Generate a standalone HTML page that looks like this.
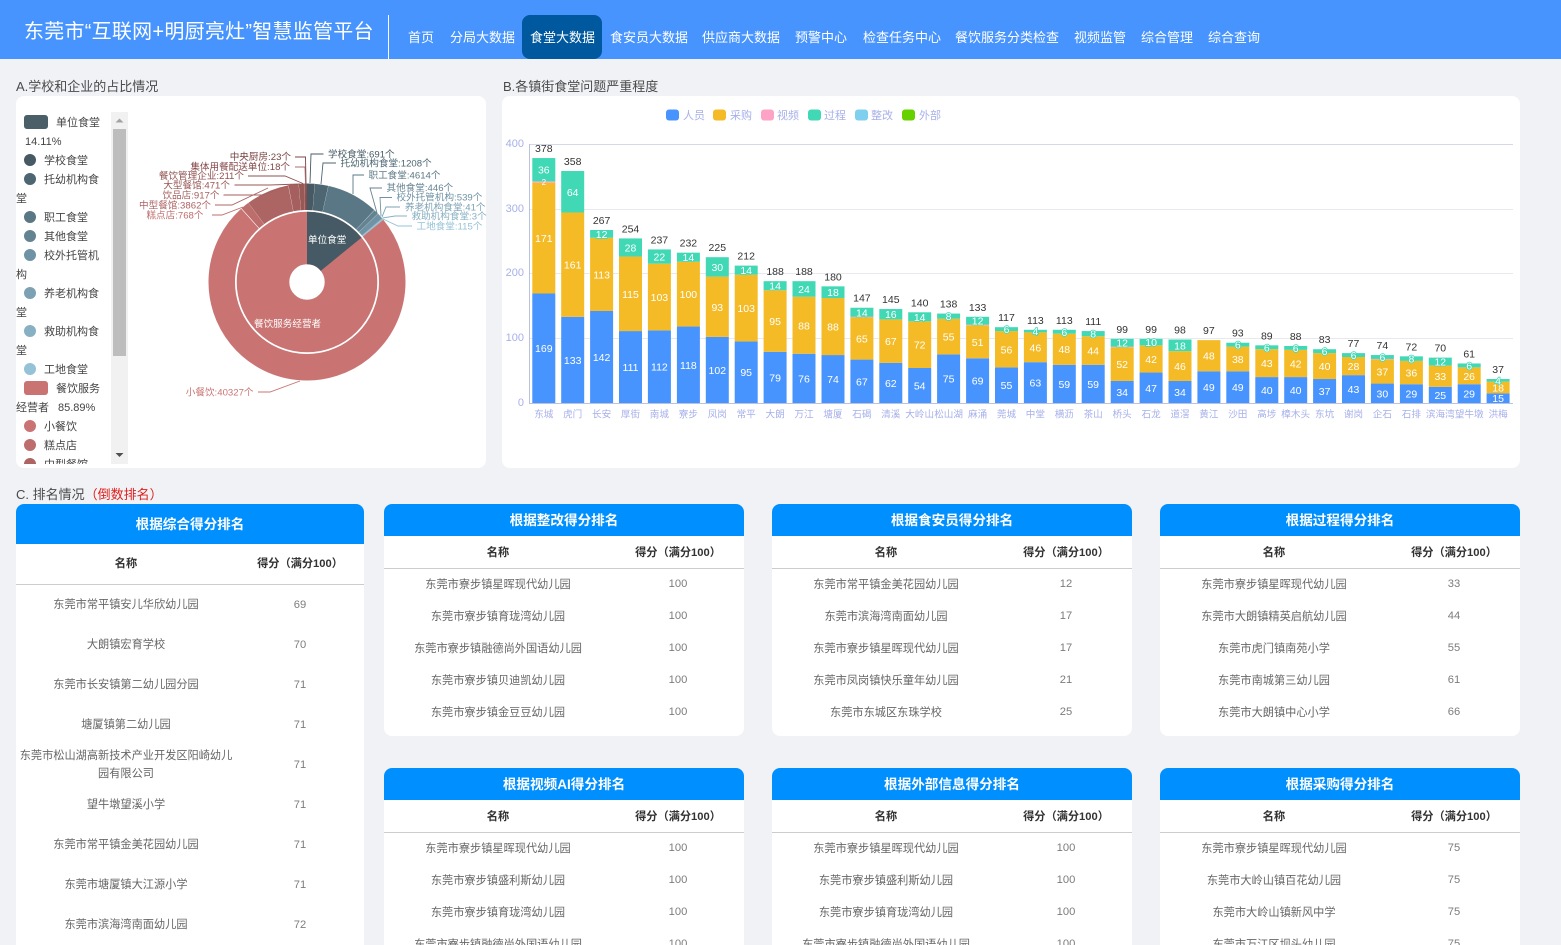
<!DOCTYPE html>
<html lang="zh-CN">
<head>
<meta charset="utf-8">
<title>东莞市“互联网+明厨亮灶”智慧监管平台</title>
<style>
*{box-sizing:border-box;margin:0;padding:0}
html,body{width:1561px;height:945px;overflow:hidden;background:#f0f2f6}
body{position:relative;font-family:"Liberation Sans","Noto Sans CJK SC",sans-serif;color:#333}
svg text{font-family:"Liberation Sans","Noto Sans CJK SC",sans-serif}
.top{position:absolute;left:0;top:0;width:1561px;height:59px;background:#4894ff}
.title{position:absolute;left:24px;top:17px;font-size:20px;line-height:30px;color:#fff;white-space:nowrap;letter-spacing:.25px}
.div{position:absolute;left:388px;top:15px;width:1px;height:44px;background:#fff}
.act{position:absolute;left:522px;top:15px;width:80px;height:44px;background:#00599e;border-radius:8px}
.n{position:absolute;top:28px;font-size:13px;line-height:20px;color:#fff;white-space:nowrap}
.sec{position:absolute;font-size:13px;line-height:18px;color:#4a4a4a;white-space:nowrap}
.sec span{color:#e0201c}
.box{position:absolute;top:96px;height:372px;background:#fff;border-radius:8px}
.card{position:absolute;width:360px;background:#fff;border-radius:8px;overflow:hidden}
.hd{height:32px;line-height:34px;background:#008ffe;color:#fff;font-weight:bold;font-size:13.6px;text-align:center}
.r{display:flex;height:32px;align-items:center;font-size:11.2px;color:#666;text-align:center}
.r .a{width:228px}.r .b{width:132px;color:#7c7c7c}
.h{font-weight:bold;color:#333;border-bottom:1px solid #ccc;height:33px;margin-bottom:-1px;font-size:11.2px}
.h .b{color:#333}
.big{width:348px;border-radius:8px 8px 0 0}
.big .hd{height:40px;line-height:42px}
.big .r{height:40px;line-height:18px}
.big .h{height:41px;margin-bottom:0}
.big .a{width:220px;padding:0 2px}.big .b{width:128px}
.low{border-radius:8px 8px 0 0}
</style>
</head>
<body>
<div class="top"></div>
<div class="title">东莞市“互联网+明厨亮灶”智慧监管平台</div>
<div class="div"></div>
<div class="act"></div>
<div class="n" style="left:408px">首页</div>
<div class="n" style="left:450px">分局大数据</div>
<div class="n" style="left:530px">食堂大数据</div>
<div class="n" style="left:610px">食安员大数据</div>
<div class="n" style="left:702px">供应商大数据</div>
<div class="n" style="left:795px">预警中心</div>
<div class="n" style="left:863px">检查任务中心</div>
<div class="n" style="left:955px">餐饮服务分类检查</div>
<div class="n" style="left:1074px">视频监管</div>
<div class="n" style="left:1141px">综合管理</div>
<div class="n" style="left:1208px">综合查询</div>

<div class="sec" style="left:16px;top:78px">A.学校和企业的占比情况</div>
<div class="sec" style="left:503px;top:78px">B.各镇街食堂问题严重程度</div>
<div class="sec" style="left:16px;top:486px">C. 排名情况<span>（倒数排名）</span></div>

<div class="box" style="left:16px;width:470px"></div>
<div class="box" style="left:502px;width:1018px"></div>

<svg width="1561" height="480" viewBox="0 0 1561 480" style="position:absolute;left:0;top:0">
<defs><clipPath id="lg"><rect x="16" y="96" width="95" height="368"/></clipPath></defs>

<!-- legend -->
<g clip-path="url(#lg)" font-size="11" fill="#444">
<rect x="24" y="115" width="24" height="14" rx="3" fill="#4a5f68"/><text x="56" y="126">单位食堂</text>
<text x="25" y="145">14.11%</text>
<circle cx="30" cy="160" r="6" fill="#475a64"/><text x="44" y="164">学校食堂</text>
<circle cx="30" cy="179" r="6" fill="#4d6672"/><text x="44" y="183">托幼机构食</text>
<text x="16" y="202">堂</text>
<circle cx="30" cy="217" r="6" fill="#5a7785"/><text x="44" y="221">职工食堂</text>
<circle cx="30" cy="236" r="6" fill="#648391"/><text x="44" y="240">其他食堂</text>
<circle cx="30" cy="255" r="6" fill="#6f93a4"/><text x="44" y="259">校外托管机</text>
<text x="16" y="278">构</text>
<circle cx="30" cy="293" r="6" fill="#7da1b3"/><text x="44" y="297">养老机构食</text>
<text x="16" y="316">堂</text>
<circle cx="30" cy="331" r="6" fill="#88b0c3"/><text x="44" y="335">救助机构食</text>
<text x="16" y="354">堂</text>
<circle cx="30" cy="369" r="6" fill="#95c2d7"/><text x="44" y="373">工地食堂</text>
<rect x="24" y="381" width="24" height="14" rx="3" fill="#c97473"/><text x="56" y="392">餐饮服务</text>
<text x="16" y="411">经营者</text><text x="58" y="411">85.89%</text>
<circle cx="30" cy="426" r="6" fill="#c97473"/><text x="44" y="430">小餐饮</text>
<circle cx="30" cy="445" r="6" fill="#bd6d6c"/><text x="44" y="449">糕点店</text>
<circle cx="30" cy="464" r="6" fill="#ad6564"/><text x="44" y="468">中型餐馆</text>
</g>
<rect x="111" y="112" width="17" height="352" fill="#f1f1f1"/>
<rect x="113" y="129" width="13" height="227" fill="#bdbdbd"/>
<path d="M115.500 122.500l4-4 4 4z" fill="#a3a3a3"/>
<path d="M115.500 453l4 4 4-4z" fill="#505050"/>

<!-- donut -->
<g transform="translate(307 282) rotate(-90)" fill="none">
<g stroke-width="52.600">
<circle r="44" pathLength="360" stroke="#c97473" stroke-dasharray="360 360"/>
<circle r="44" pathLength="360" stroke="#455a64" stroke-dasharray="50.800 360"/>
</g>
<g stroke-width="26.500">
<circle r="85.250" pathLength="360" stroke="#475a64" stroke-dasharray="4.480 360"/>
<circle r="85.250" pathLength="360" stroke="#4d6672" stroke-dasharray="7.900 360" transform="rotate(4.585)"/>
<circle r="85.250" pathLength="360" stroke="#5a7785" stroke-dasharray="30.520 360" transform="rotate(12.600)"/>
<circle r="85.250" pathLength="360" stroke="#648391" stroke-dasharray="2.860 360" transform="rotate(43.220)"/>
<circle r="85.250" pathLength="360" stroke="#6f93a4" stroke-dasharray="3.480 360" transform="rotate(46.180)"/>
<circle r="85.250" pathLength="360" stroke="#7da1b3" stroke-dasharray=".3 360" transform="rotate(49.760)"/>
<circle r="85.250" pathLength="360" stroke="#95c2d7" stroke-dasharray=".76 360" transform="rotate(50.050)"/>
<circle r="85.250" pathLength="360" stroke="#c97473" stroke-dasharray="267.500 360" transform="rotate(50.810)"/>
<circle r="85.250" pathLength="360" stroke="#bd6d6c" stroke-dasharray="5 360" transform="rotate(318.400)"/>
<circle r="85.250" pathLength="360" stroke="#ad6564" stroke-dasharray="25.520 360" transform="rotate(323.500)"/>
<circle r="85.250" pathLength="360" stroke="#a55f5e" stroke-dasharray="5.980 360" transform="rotate(349.130)"/>
<circle r="85.250" pathLength="360" stroke="#985856" stroke-dasharray="3.050 360" transform="rotate(355.210)"/>
<circle r="85.250" pathLength="360" stroke="#8f5250" stroke-dasharray="1.340 360" transform="rotate(358.340)"/>
<circle r="85.250" pathLength="360" stroke="#7a4444" stroke-dasharray=".26 360" transform="rotate(359.740)"/>
</g>
</g>
<text x="308" y="243" font-size="9.600" fill="#fff">单位食堂</text>
<text x="254" y="327" font-size="9.600" fill="#fff">餐饮服务经营者</text>

<!-- leader lines -->
<g fill="none" stroke-width=".9">
<path d="M295 157H305.500L306 183.500" stroke="#7a4444"/>
<path d="M295 167H305L305.500 183.500" stroke="#a87070"/>
<path d="M248 176H285L303 183.500" stroke="#8f5250"/>
<path d="M234.500 185H270L300 184" stroke="#985856"/>
<path d="M223.500 195H262L292 184.500" stroke="#a55f5e"/>
<path d="M215 205H232L268 188" stroke="#ad6564"/>
<path d="M212 215H222L243 207" stroke="#bd6d6c"/>
<path d="M258 392H270L300 381" stroke="#c97473"/>
<path d="M323.500 154H311L310 183" stroke="#475a64"/>
<path d="M336 163H323L321 184" stroke="#4d6672"/>
<path d="M364 175H353V194" stroke="#5a7785"/>
<path d="M382 188H370L377 213" stroke="#648391"/>
<path d="M392 197.500H380L381 216" stroke="#6f93a4"/>
<path d="M400 207H386L382 217" stroke="#7da1b3"/>
<path d="M407 216H395L382.500 218" stroke="#88b0c3"/>
<path d="M412 226H398L383 219" stroke="#95c2d7"/>
</g>
<!-- donut labels -->
<g font-size="9.600" text-anchor="end">
<text x="291" y="160" fill="#7a4444">中央厨房:23个</text>
<text x="290" y="170" fill="#85484a">集体用餐配送单位:18个</text>
<text x="244" y="179" fill="#8f5250">餐饮管理企业:211个</text>
<text x="230" y="188.500" fill="#985856">大型餐馆:471个</text>
<text x="219.500" y="198.500" fill="#a55f5e">饮品店:917个</text>
<text x="211" y="208.500" fill="#ad6564">中型餐馆:3862个</text>
<text x="203.500" y="218.500" fill="#bd6d6c">糕点店:768个</text>
<text x="253.500" y="395.500" fill="#c97473">小餐饮:40327个</text>
</g>
<g font-size="9.600">
<text x="328" y="157.500" fill="#475a64">学校食堂:691个</text>
<text x="340.500" y="166.500" fill="#4d6672">托幼机构食堂:1208个</text>
<text x="368.500" y="178.500" fill="#5a7785">职工食堂:4614个</text>
<text x="386.500" y="191" fill="#648391">其他食堂:446个</text>
<text x="396.500" y="200.500" fill="#6f93a4">校外托管机构:539个</text>
<text x="405" y="210.500" fill="#7da1b3">养老机构食堂:41个</text>
<text x="411.500" y="219.500" fill="#88b0c3">救助机构食堂:3个</text>
<text x="416.500" y="229.500" fill="#95c2d7">工地食堂:115个</text>
</g>

<!-- bar legend -->
<g>
<rect x="666" y="109.500" width="13" height="11" rx="3" fill="#4894ff"/>
<rect x="713" y="109.500" width="13" height="11" rx="3" fill="#f4bb26"/>
<rect x="761" y="109.500" width="13" height="11" rx="3" fill="#fea3c6"/>
<rect x="808" y="109.500" width="13" height="11" rx="3" fill="#41d8b5"/>
<rect x="855" y="109.500" width="13" height="11" rx="3" fill="#7fd0ee"/>
<rect x="902" y="109.500" width="13" height="11" rx="3" fill="#67d100"/>
</g>
<g font-size="11" fill="#a7b0ea">
<text x="683" y="119">人员</text><text x="730" y="119">采购</text><text x="777" y="119">视频</text><text x="824" y="119">过程</text><text x="871" y="119">整改</text><text x="919" y="119">外部</text>
</g>

<!-- grid -->
<g stroke="#e8e9ef" stroke-width="1">
<path d="M529 144.500H1513" stroke="#d5d8e6"/>
<path d="M529 209.500H1513"/>
<path d="M529 273.500H1513"/>
<path d="M529 338.500H1513"/>
</g>
<path d="M529.500 144V403.500H1513" fill="none" stroke="#bcc2de"/>
<g font-size="11" fill="#a7b0ea" text-anchor="end">
<text x="524" y="147">400</text><text x="524" y="212">300</text><text x="524" y="276">200</text><text x="524" y="341">100</text><text x="524" y="406">0</text>
</g>

<!-- bars -->
<g transform="translate(0 403) scale(1 .648)">
<g fill="#4894ff">
<rect x="532.300" y="-169" width="23" height="169"/><rect x="561.200" y="-133" width="23" height="133"/><rect x="590.100" y="-142" width="23" height="142"/><rect x="619" y="-111" width="23" height="111"/><rect x="647.900" y="-112" width="23" height="112"/><rect x="676.900" y="-118" width="23" height="118"/><rect x="705.800" y="-102" width="23" height="102"/><rect x="734.700" y="-95" width="23" height="95"/><rect x="763.600" y="-79" width="23" height="79"/><rect x="792.500" y="-76" width="23" height="76"/><rect x="821.500" y="-74" width="23" height="74"/><rect x="850.400" y="-67" width="23" height="67"/><rect x="879.300" y="-62" width="23" height="62"/><rect x="908.200" y="-54" width="23" height="54"/><rect x="937.100" y="-75" width="23" height="75"/><rect x="966.100" y="-69" width="23" height="69"/><rect x="995" y="-55" width="23" height="55"/><rect x="1023.900" y="-63" width="23" height="63"/><rect x="1052.800" y="-59" width="23" height="59"/><rect x="1081.700" y="-59" width="23" height="59"/><rect x="1110.700" y="-34" width="23" height="34"/><rect x="1139.600" y="-47" width="23" height="47"/><rect x="1168.500" y="-34" width="23" height="34"/><rect x="1197.400" y="-49" width="23" height="49"/><rect x="1226.300" y="-49" width="23" height="49"/><rect x="1255.300" y="-40" width="23" height="40"/><rect x="1284.200" y="-40" width="23" height="40"/><rect x="1313.100" y="-37" width="23" height="37"/><rect x="1342" y="-43" width="23" height="43"/><rect x="1370.900" y="-30" width="23" height="30"/><rect x="1399.900" y="-29" width="23" height="29"/><rect x="1428.800" y="-25" width="23" height="25"/><rect x="1457.700" y="-29" width="23" height="29"/><rect x="1486.600" y="-15" width="23" height="15"/>
</g>
<g fill="#f4bb26">
<rect x="532.300" y="-340" width="23" height="171"/><rect x="561.200" y="-294" width="23" height="161"/><rect x="590.100" y="-255" width="23" height="113"/><rect x="619" y="-226" width="23" height="115"/><rect x="647.900" y="-215" width="23" height="103"/><rect x="676.900" y="-218" width="23" height="100"/><rect x="705.800" y="-195" width="23" height="93"/><rect x="734.700" y="-198" width="23" height="103"/><rect x="763.600" y="-174" width="23" height="95"/><rect x="792.500" y="-164" width="23" height="88"/><rect x="821.500" y="-162" width="23" height="88"/><rect x="850.400" y="-132" width="23" height="65"/><rect x="879.300" y="-129" width="23" height="67"/><rect x="908.200" y="-126" width="23" height="72"/><rect x="937.100" y="-130" width="23" height="55"/><rect x="966.100" y="-120" width="23" height="51"/><rect x="995" y="-111" width="23" height="56"/><rect x="1023.900" y="-109" width="23" height="46"/><rect x="1052.800" y="-107" width="23" height="48"/><rect x="1081.700" y="-103" width="23" height="44"/><rect x="1110.700" y="-86" width="23" height="52"/><rect x="1139.600" y="-89" width="23" height="42"/><rect x="1168.500" y="-80" width="23" height="46"/><rect x="1197.400" y="-97" width="23" height="48"/><rect x="1226.300" y="-87" width="23" height="38"/><rect x="1255.300" y="-83" width="23" height="43"/><rect x="1284.200" y="-82" width="23" height="42"/><rect x="1313.100" y="-77" width="23" height="40"/><rect x="1342" y="-71" width="23" height="28"/><rect x="1370.900" y="-67" width="23" height="37"/><rect x="1399.900" y="-65" width="23" height="36"/><rect x="1428.800" y="-58" width="23" height="33"/><rect x="1457.700" y="-55" width="23" height="26"/><rect x="1486.600" y="-33" width="23" height="18"/>
</g>
<g fill="#fea3c6">
<rect x="532.300" y="-342" width="23" height="2"/><rect x="850.400" y="-133" width="23" height="1"/><rect x="966.100" y="-121" width="23" height="1"/><rect x="1110.700" y="-87" width="23" height="1"/><rect x="1370.900" y="-68" width="23" height="1"/>
</g>
<g fill="#41d8b5">
<rect x="532.300" y="-378" width="23" height="36"/><rect x="561.200" y="-358" width="23" height="64"/><rect x="590.100" y="-267" width="23" height="12"/><rect x="619" y="-254" width="23" height="28"/><rect x="647.900" y="-237" width="23" height="22"/><rect x="676.900" y="-232" width="23" height="14"/><rect x="705.800" y="-225" width="23" height="30"/><rect x="734.700" y="-212" width="23" height="14"/><rect x="763.600" y="-188" width="23" height="14"/><rect x="792.500" y="-188" width="23" height="24"/><rect x="821.500" y="-180" width="23" height="18"/><rect x="850.400" y="-147" width="23" height="14"/><rect x="879.300" y="-145" width="23" height="16"/><rect x="908.200" y="-140" width="23" height="14"/><rect x="937.100" y="-138" width="23" height="8"/><rect x="966.100" y="-133" width="23" height="12"/><rect x="995" y="-117" width="23" height="6"/><rect x="1023.900" y="-113" width="23" height="4"/><rect x="1052.800" y="-113" width="23" height="6"/><rect x="1081.700" y="-111" width="23" height="8"/><rect x="1110.700" y="-99" width="23" height="12"/><rect x="1139.600" y="-99" width="23" height="10"/><rect x="1168.500" y="-98" width="23" height="18"/><rect x="1226.300" y="-93" width="23" height="6"/><rect x="1255.300" y="-89" width="23" height="6"/><rect x="1284.200" y="-88" width="23" height="6"/><rect x="1313.100" y="-83" width="23" height="6"/><rect x="1342" y="-77" width="23" height="6"/><rect x="1370.900" y="-74" width="23" height="6"/><rect x="1399.900" y="-72" width="23" height="7"/><rect x="1428.800" y="-70" width="23" height="12"/><rect x="1457.700" y="-61" width="23" height="6"/><rect x="1486.600" y="-37" width="23" height="4"/>
</g>
</g>

<!-- blue labels -->
<g font-size="10.500" fill="#fff" text-anchor="middle">
<text x="543.800" y="352.200">169</text><text x="572.700" y="363.900">133</text><text x="601.600" y="361">142</text><text x="630.500" y="371">111</text><text x="659.400" y="370.700">112</text><text x="688.400" y="368.800">118</text><text x="717.300" y="374">102</text><text x="746.200" y="376.200">95</text><text x="775.100" y="381.400">79</text><text x="804" y="382.400">76</text><text x="833" y="383">74</text><text x="861.900" y="385.300">67</text><text x="890.800" y="386.900">62</text><text x="919.700" y="389.500">54</text><text x="948.600" y="382.700">75</text><text x="977.600" y="384.600">69</text><text x="1006.500" y="389.200">55</text><text x="1035.400" y="386.600">63</text><text x="1064.300" y="387.900">59</text><text x="1093.200" y="387.900">59</text><text x="1122.200" y="396">34</text><text x="1151.100" y="391.800">47</text><text x="1180" y="396">34</text><text x="1208.900" y="391.100">49</text><text x="1237.800" y="391.100">49</text><text x="1266.800" y="394">40</text><text x="1295.700" y="394">40</text><text x="1324.600" y="395">37</text><text x="1353.500" y="393.100">43</text><text x="1382.400" y="397.300">30</text><text x="1411.400" y="397.600">29</text><text x="1440.300" y="398.900">25</text><text x="1469.200" y="397.600">29</text><text x="1498.100" y="402.100">15</text>
<!-- yellow labels -->
<text x="543.800" y="242.100">171</text><text x="572.700" y="268.600">161</text><text x="601.600" y="278.400">113</text><text x="630.500" y="297.800">115</text><text x="659.400" y="301">103</text><text x="688.400" y="298.100">100</text><text x="717.300" y="310.800">93</text><text x="746.200" y="312">103</text><text x="775.100" y="325">95</text><text x="804" y="329.300">88</text><text x="833" y="330.500">88</text><text x="861.900" y="342.500">65</text><text x="890.800" y="345.100">67</text><text x="919.700" y="348.700">72</text><text x="948.600" y="340.600">55</text><text x="977.600" y="345.800">51</text><text x="1006.500" y="353.300">56</text><text x="1035.400" y="351.300">46</text><text x="1064.300" y="353.200">48</text><text x="1093.200" y="354.500">44</text><text x="1122.200" y="368.200">52</text><text x="1151.100" y="362.900">42</text><text x="1180" y="370.100">46</text><text x="1208.900" y="359.600">48</text><text x="1237.800" y="362.900">38</text><text x="1266.800" y="367.200">43</text><text x="1295.700" y="367.500">42</text><text x="1324.600" y="370">40</text><text x="1353.500" y="370">28</text><text x="1382.400" y="375.600">37</text><text x="1411.400" y="376.500">36</text><text x="1440.300" y="380.100">33</text><text x="1469.200" y="379.800">26</text><text x="1498.100" y="391.500">18</text>
</g>
<!-- green labels -->
<g font-size="10.500" fill="#fff" text-anchor="middle" stroke="#41d8b5" stroke-width="1.600" paint-order="stroke">
<text x="543.800" y="173.700">36</text><text x="572.700" y="195.800">64</text><text x="601.600" y="237.900">12</text><text x="630.500" y="251.500">28</text><text x="659.400" y="260.600">22</text><text x="688.400" y="261.200">14</text><text x="717.300" y="270.900">30</text><text x="746.200" y="274.200">14</text><text x="775.100" y="289.700">14</text><text x="804" y="292.900">24</text><text x="833" y="296.200">18</text><text x="861.900" y="316.300">14</text><text x="890.800" y="318.200">16</text><text x="919.700" y="320.900">14</text><text x="948.600" y="320.200">8</text><text x="977.600" y="324.700">12</text><text x="1006.500" y="333.200">6</text><text x="1035.400" y="335.100">4</text><text x="1064.300" y="335.800">6</text><text x="1093.200" y="337.700">8</text><text x="1122.200" y="346.700">12</text><text x="1151.100" y="346.100">10</text><text x="1180" y="349.400">18</text><text x="1237.800" y="348.700">6</text><text x="1266.800" y="351.300">6</text><text x="1295.700" y="352">6</text><text x="1324.600" y="355.200">6</text><text x="1353.500" y="359.100">6</text><text x="1382.400" y="361">6</text><text x="1411.400" y="362.600">8</text><text x="1440.300" y="365.500">12</text><text x="1469.200" y="369.500">6</text><text x="1498.100" y="384.300">4</text>
</g>
<text x="543.800" y="185" font-size="8" fill="#fff" text-anchor="middle">2</text>
<!-- totals -->
<g font-size="10.500" fill="#333" text-anchor="middle">
<text x="543.800" y="152">378</text><text x="572.700" y="165">358</text><text x="601.600" y="224">267</text><text x="630.500" y="232.400">254</text><text x="659.400" y="243.400">237</text><text x="688.400" y="246.700">232</text><text x="717.300" y="251.200">225</text><text x="746.200" y="259.600">212</text><text x="775.100" y="275.200">188</text><text x="804" y="275.200">188</text><text x="833" y="280.400">180</text><text x="861.900" y="301.700">147</text><text x="890.800" y="303">145</text><text x="919.700" y="306.300">140</text><text x="948.600" y="307.600">138</text><text x="977.600" y="310.800">133</text><text x="1006.500" y="321.200">117</text><text x="1035.400" y="323.800">113</text><text x="1064.300" y="323.800">113</text><text x="1093.200" y="325.100">111</text><text x="1122.200" y="332.800">99</text><text x="1151.100" y="332.800">99</text><text x="1180" y="333.500">98</text><text x="1208.900" y="334.100">97</text><text x="1237.800" y="336.700">93</text><text x="1266.800" y="339.300">89</text><text x="1295.700" y="340">88</text><text x="1324.600" y="343.200">83</text><text x="1353.500" y="347.100">77</text><text x="1382.400" y="349">74</text><text x="1411.400" y="350.300">72</text><text x="1440.300" y="351.600">70</text><text x="1469.200" y="357.500">61</text><text x="1498.100" y="373">37</text>
</g>
<!-- x labels -->
<g font-size="9.600" fill="#a7b0ea" text-anchor="middle">
<text x="543.800" y="417.500">东城</text><text x="572.700" y="417.500">虎门</text><text x="601.600" y="417.500">长安</text><text x="630.500" y="417.500">厚街</text><text x="659.400" y="417.500">南城</text><text x="688.400" y="417.500">寮步</text><text x="717.300" y="417.500">凤岗</text><text x="746.200" y="417.500">常平</text><text x="775.100" y="417.500">大朗</text><text x="804" y="417.500">万江</text><text x="833" y="417.500">塘厦</text><text x="861.900" y="417.500">石碣</text><text x="890.800" y="417.500">清溪</text><text x="919.700" y="417.500">大岭山</text><text x="948.600" y="417.500">松山湖</text><text x="977.600" y="417.500">麻涌</text><text x="1006.500" y="417.500">莞城</text><text x="1035.400" y="417.500">中堂</text><text x="1064.300" y="417.500">横沥</text><text x="1093.200" y="417.500">茶山</text><text x="1122.200" y="417.500">桥头</text><text x="1151.100" y="417.500">石龙</text><text x="1180" y="417.500">道滘</text><text x="1208.900" y="417.500">黄江</text><text x="1237.800" y="417.500">沙田</text><text x="1266.800" y="417.500">高埗</text><text x="1295.700" y="417.500">樟木头</text><text x="1324.600" y="417.500">东坑</text><text x="1353.500" y="417.500">谢岗</text><text x="1382.400" y="417.500">企石</text><text x="1411.400" y="417.500">石排</text><text x="1440.300" y="417.500">滨海湾</text><text x="1469.200" y="417.500">望牛墩</text><text x="1498.100" y="417.500">洪梅</text>
</g>
</svg>

<!-- tables -->
<div class="card big" style="left:16px;top:504px;height:441px">
<div class="hd">根据综合得分排名</div>
<div class="r h"><div class="a">名称</div><div class="b">得分（满分100）</div></div>
<div class="r"><div class="a">东莞市常平镇安儿华欣幼儿园</div><div class="b">69</div></div>
<div class="r"><div class="a">大朗镇宏育学校</div><div class="b">70</div></div>
<div class="r"><div class="a">东莞市长安镇第二幼儿园分园</div><div class="b">71</div></div>
<div class="r"><div class="a">塘厦镇第二幼儿园</div><div class="b">71</div></div>
<div class="r"><div class="a">东莞市松山湖高新技术产业开发区阳崎幼儿园有限公司</div><div class="b">71</div></div>
<div class="r"><div class="a">望牛墩望溪小学</div><div class="b">71</div></div>
<div class="r"><div class="a">东莞市常平镇金美花园幼儿园</div><div class="b">71</div></div>
<div class="r"><div class="a">东莞市塘厦镇大江源小学</div><div class="b">71</div></div>
<div class="r"><div class="a">东莞市滨海湾南面幼儿园</div><div class="b">72</div></div>
</div>

<div class="card" style="left:384px;top:504px;height:232px">
<div class="hd">根据整改得分排名</div>
<div class="r h"><div class="a">名称</div><div class="b">得分（满分100）</div></div>
<div class="r"><div class="a">东莞市寮步镇星晖现代幼儿园</div><div class="b">100</div></div>
<div class="r"><div class="a">东莞市寮步镇育珑湾幼儿园</div><div class="b">100</div></div>
<div class="r"><div class="a">东莞市寮步镇融德尚外国语幼儿园</div><div class="b">100</div></div>
<div class="r"><div class="a">东莞市寮步镇贝迪凯幼儿园</div><div class="b">100</div></div>
<div class="r"><div class="a">东莞市寮步镇金豆豆幼儿园</div><div class="b">100</div></div>
</div>

<div class="card" style="left:772px;top:504px;height:232px">
<div class="hd">根据食安员得分排名</div>
<div class="r h"><div class="a">名称</div><div class="b">得分（满分100）</div></div>
<div class="r"><div class="a">东莞市常平镇金美花园幼儿园</div><div class="b">12</div></div>
<div class="r"><div class="a">东莞市滨海湾南面幼儿园</div><div class="b">17</div></div>
<div class="r"><div class="a">东莞市寮步镇星晖现代幼儿园</div><div class="b">17</div></div>
<div class="r"><div class="a">东莞市凤岗镇快乐童年幼儿园</div><div class="b">21</div></div>
<div class="r"><div class="a">东莞市东城区东珠学校</div><div class="b">25</div></div>
</div>

<div class="card" style="left:1160px;top:504px;height:232px">
<div class="hd">根据过程得分排名</div>
<div class="r h"><div class="a">名称</div><div class="b">得分（满分100）</div></div>
<div class="r"><div class="a">东莞市寮步镇星晖现代幼儿园</div><div class="b">33</div></div>
<div class="r"><div class="a">东莞市大朗镇精英启航幼儿园</div><div class="b">44</div></div>
<div class="r"><div class="a">东莞市虎门镇南苑小学</div><div class="b">55</div></div>
<div class="r"><div class="a">东莞市南城第三幼儿园</div><div class="b">61</div></div>
<div class="r"><div class="a">东莞市大朗镇中心小学</div><div class="b">66</div></div>
</div>

<div class="card low" style="left:384px;top:768px;height:177px">
<div class="hd">根据视频AI得分排名</div>
<div class="r h"><div class="a">名称</div><div class="b">得分（满分100）</div></div>
<div class="r"><div class="a">东莞市寮步镇星晖现代幼儿园</div><div class="b">100</div></div>
<div class="r"><div class="a">东莞市寮步镇盛利斯幼儿园</div><div class="b">100</div></div>
<div class="r"><div class="a">东莞市寮步镇育珑湾幼儿园</div><div class="b">100</div></div>
<div class="r"><div class="a">东莞市寮步镇融德尚外国语幼儿园</div><div class="b">100</div></div>
</div>

<div class="card low" style="left:772px;top:768px;height:177px">
<div class="hd">根据外部信息得分排名</div>
<div class="r h"><div class="a">名称</div><div class="b">得分（满分100）</div></div>
<div class="r"><div class="a">东莞市寮步镇星晖现代幼儿园</div><div class="b">100</div></div>
<div class="r"><div class="a">东莞市寮步镇盛利斯幼儿园</div><div class="b">100</div></div>
<div class="r"><div class="a">东莞市寮步镇育珑湾幼儿园</div><div class="b">100</div></div>
<div class="r"><div class="a">东莞市寮步镇融德尚外国语幼儿园</div><div class="b">100</div></div>
</div>

<div class="card low" style="left:1160px;top:768px;height:177px">
<div class="hd">根据采购得分排名</div>
<div class="r h"><div class="a">名称</div><div class="b">得分（满分100）</div></div>
<div class="r"><div class="a">东莞市寮步镇星晖现代幼儿园</div><div class="b">75</div></div>
<div class="r"><div class="a">东莞市大岭山镇百花幼儿园</div><div class="b">75</div></div>
<div class="r"><div class="a">东莞市大岭山镇新风中学</div><div class="b">75</div></div>
<div class="r"><div class="a">东莞市万江区坝头幼儿园</div><div class="b">75</div></div>
</div>
</body>
</html>
